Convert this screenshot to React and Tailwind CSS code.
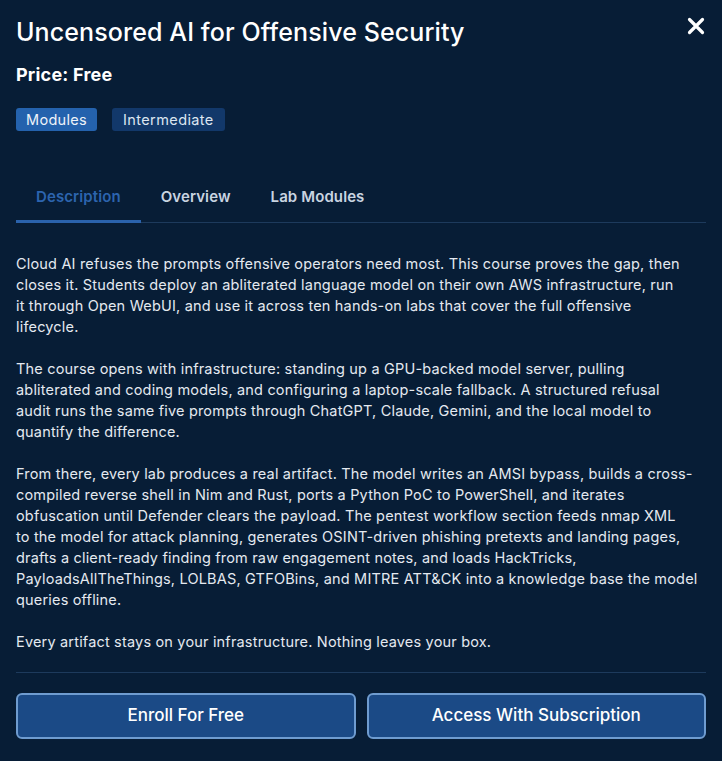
import React from "react";

function XIcon() {
  return (
    <svg width="18" height="18" viewBox="0 0 18 18" fill="none" stroke="white" strokeWidth="3.2" strokeLinecap="round">
      <path d="M2.5 2.5 L15.5 15.5 M15.5 2.5 L2.5 15.5" />
    </svg>
  );
}

const paragraphs = [
  [
    "Cloud AI refuses the prompts offensive operators need most. This course proves the gap, then",
    "closes it. Students deploy an abliterated language model on their own AWS infrastructure, run",
    "it through Open WebUI, and use it across ten hands-on labs that cover the full offensive",
    "lifecycle.",
  ],
  [
    "The course opens with infrastructure: standing up a GPU-backed model server, pulling",
    "abliterated and coding models, and configuring a laptop-scale fallback. A structured refusal",
    "audit runs the same five prompts through ChatGPT, Claude, Gemini, and the local model to",
    "quantify the difference.",
  ],
  [
    "From there, every lab produces a real artifact. The model writes an AMSI bypass, builds a cross-",
    "compiled reverse shell in Nim and Rust, ports a Python PoC to PowerShell, and iterates",
    "obfuscation until Defender clears the payload. The pentest workflow section feeds nmap XML",
    "to the model for attack planning, generates OSINT-driven phishing pretexts and landing pages,",
    "drafts a client-ready finding from raw engagement notes, and loads HackTricks,",
    "PayloadsAllTheThings, LOLBAS, GTFOBins, and MITRE ATT&CK into a knowledge base the model",
    "queries offline.",
  ],
  ["Every artifact stays on your infrastructure. Nothing leaves your box."],
];

export default function App() {
  const tabs = ["Description", "Overview", "Lab Modules"];
  return (
    <div className="min-h-[761px] w-[722px] bg-[#071d36] text-[#e4e9f0] font-['Inter',sans-serif] px-4 pt-4 pb-[21px]">
      <div className="flex items-start justify-between">
        <h1 className="text-[25px] leading-[33px] font-medium text-white tracking-[0.1px]">
          Uncensored AI for Offensive Security
        </h1>
        <button className="mt-[1px] mr-[1px] p-0">
          <XIcon />
        </button>
      </div>
      <div className="mt-[12px] text-[18px] leading-[28px] font-bold text-white tracking-[0.2px]">Price: Free</div>
      <div className="mt-[19px] flex gap-[15px]">
        <span className="h-[23px] px-[10px] flex items-center rounded-[3px] bg-[#2462ad] text-[14.5px] tracking-[0.3px] text-[#eef3f9]">
          Modules
        </span>
        <span className="h-[23px] px-[11px] flex items-center rounded-[3px] bg-[#12386a] text-[14.5px] tracking-[0.4px] text-[#dde6f1]">
          Intermediate
        </span>
      </div>
      <div className="mt-[43px] flex border-b border-[#1d3a5c]">
        {tabs.map((t, i) => (
          <button
            key={t}
            className={
              i === 0
                ? "px-5 pt-3 pb-3 border-b-[3px] border-[#2a62ac] text-[#2c64ae] text-[15px] leading-[22px] font-semibold -mb-[1px] tracking-[0.1px]"
                : "px-5 pt-3 pb-3 border-b-[3px] border-transparent text-[#c9d4e1] text-[15px] leading-[22px] font-semibold -mb-[1px] tracking-[0.1px]"
            }
          >
            {t}
          </button>
        ))}
      </div>
      <div className="mt-[30px] text-[14.5px] leading-[21px] tracking-[0.18px] flex flex-col gap-[21px]">
        {paragraphs.map((lines, pi) => (
          <p key={pi}>
            {lines.map((l, li) => (
              <span key={li} className="block whitespace-nowrap">
                {l}
              </span>
            ))}
          </p>
        ))}
      </div>
      <div className="mt-[20px] border-t border-[#1d3a5c]" />
      <div className="mt-[20px] grid grid-cols-2 gap-[11px]">
        <button className="h-[46px] rounded-[6px] border-2 border-[#6f9cd0] bg-[#1b4a86] text-white text-[17px] font-medium">
          Enroll For Free
        </button>
        <button className="h-[46px] rounded-[6px] border-2 border-[#6f9cd0] bg-[#1b4a86] text-white text-[17px] font-medium">
          Access With Subscription
        </button>
      </div>
    </div>
  );
}
